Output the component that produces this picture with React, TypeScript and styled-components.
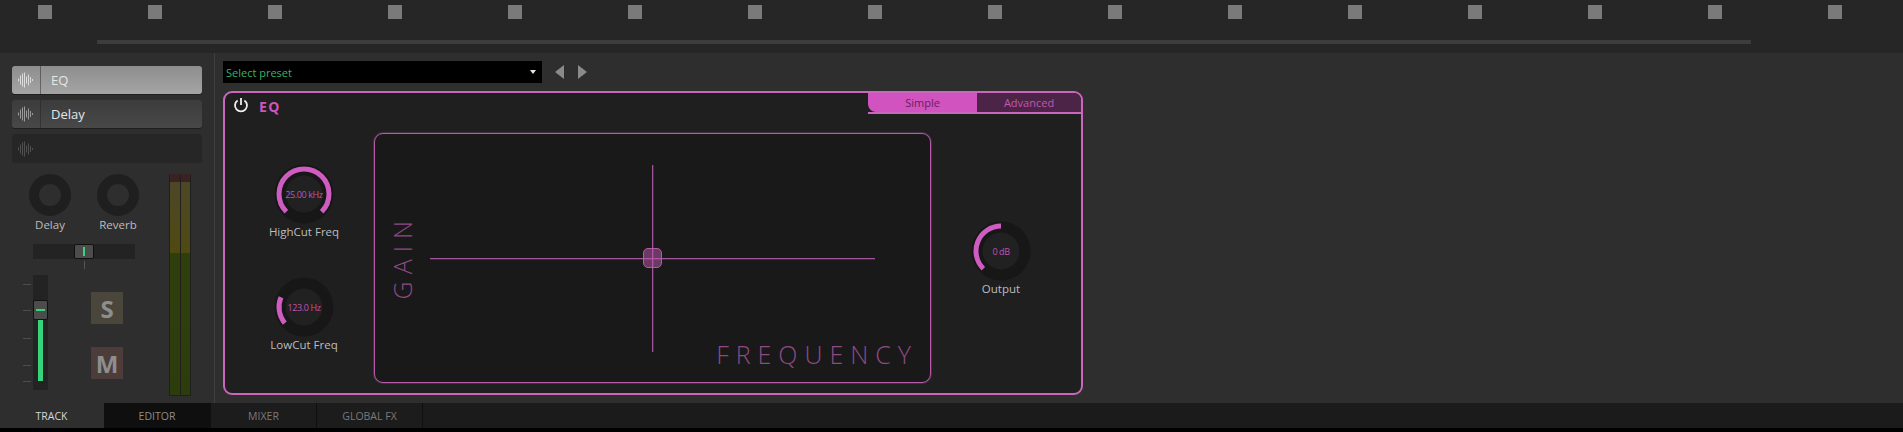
import { FC } from "react";
import styled, { createGlobalStyle } from "styled-components";

const GlobalStyle = createGlobalStyle`
  html, body {
    margin: 0;
    padding: 0;
    background: #000;
  }
  body {
    font-family: "Open Sans", "Noto Sans", sans-serif;
  }
`;

const Page = styled.div`
  width: 1903px;
  height: 432px;
  display: flex;
  flex-direction: column;
  overflow: hidden;
  background: #000;
`;

const Timeline = styled.div`
  height: 53px;
  flex: none;
  background: #262626;
  padding: 5px 0 0 38px;
  box-sizing: border-box;
`;

const MarkerRow = styled.div`
  display: flex;
  height: 35px;
`;

const MarkerCell = styled.div<{ $first?: boolean }>`
  width: ${(p) => (p.$first ? 110 : 120)}px;
  flex: none;
`;

const Marker = styled.div`
  width: 14px;
  height: 14px;
  background: #7a7a7a;
`;

const TimelineTrack = styled.div`
  margin-left: 59px;
  width: 1654px;
  height: 4px;
  background: #3d3d3d;
`;

const Main = styled.div`
  flex: 1;
  display: flex;
  min-height: 0;
  background: #2e2e2e;
`;

const Sidebar = styled.div`
  width: 215px;
  flex: none;
  box-sizing: border-box;
  padding: 13px 0 0 12px;
  border-right: 1px solid #3f3f3f;
`;

const SlotList = styled.div`
  display: flex;
  flex-direction: column;
  gap: 6px;
  width: 190px;
`;

const Slot = styled.div<{ $variant: "active" | "normal" | "empty" }>`
  height: ${(p) => (p.$variant === "empty" ? 29 : 28)}px;
  display: flex;
  align-items: center;
  border-radius: 3px;
  color: #e6e6e6;
  font-size: 13px;
  box-shadow: ${(p) => (p.$variant === "empty" ? "none" : "0 1px 0 #1f1f1f")};
  background: ${(p) =>
    p.$variant === "active"
      ? "linear-gradient(#8e8e8e, #a4a4a4)"
      : p.$variant === "normal"
        ? "linear-gradient(#3c3c3c, #484848)"
        : "#262626"};
`;

const SlotIcon = styled.div<{ $divided: boolean; $color: string }>`
  width: 29px;
  box-sizing: border-box;
  height: 100%;
  flex: none;
  display: flex;
  align-items: center;
  justify-content: center;
  color: ${(p) => p.$color};
  border-right: 1px solid ${(p) => (p.$divided ? "rgba(30, 30, 30, 0.45)" : "transparent")};
`;

const SlotName = styled.span`
  padding-left: 10px;
`;

const SendBlock = styled.div`
  display: flex;
  margin-top: 11px;
`;

const Strip = styled.div`
  width: 157px;
  flex: none;
`;

const KnobRow = styled.div`
  display: flex;
  gap: 8px;
  padding-left: 8px;
`;

const SendUnit = styled.div`
  width: 60px;
  display: flex;
  flex-direction: column;
  align-items: center;
`;

const SendKnob = styled.div`
  width: 42px;
  height: 42px;
  box-sizing: border-box;
  border-radius: 50%;
  border: 10px solid #1f1f1f;
  background: #2e2e2e;
`;

const SendLabel = styled.div`
  margin-top: 1px;
  font-size: 11.5px;
  line-height: 16px;
  color: #bdbdbd;
`;

const PanTrack = styled.div`
  margin: 11px 0 0 21px;
  width: 102px;
  height: 15px;
  background: #232323;
  display: flex;
  justify-content: center;
  position: relative;
`;

const PanHandle = styled.div`
  width: 20px;
  height: 15px;
  box-sizing: border-box;
  border: 1px solid #111;
  border-radius: 2px;
  background: #4c4c4c;
  display: flex;
  align-items: center;
  justify-content: center;
`;

const PanMark = styled.div`
  width: 2px;
  height: 9px;
  background: #37d57b;
`;

const PanTick = styled.div`
  position: absolute;
  left: 51px;
  top: 17px;
  width: 1px;
  height: 8px;
  background: #555;
`;

const MixRow = styled.div`
  display: flex;
  margin-top: 16px;
`;

const Fader = styled.div`
  margin-left: 21px;
  width: 15px;
  height: 115px;
  flex: none;
  position: relative;
  background: #232323;
`;

const FaderTick = styled.div<{ $top: number }>`
  position: absolute;
  left: -10px;
  top: ${(p) => p.$top}px;
  width: 8px;
  height: 1px;
  background: #4d4d4d;
`;

const FaderFill = styled.div`
  position: absolute;
  left: 5px;
  top: 45px;
  width: 5px;
  height: 61px;
  background: #37d57b;
`;

const FaderHandle = styled.div`
  position: absolute;
  left: 0;
  top: 25px;
  width: 15px;
  height: 20px;
  box-sizing: border-box;
  border: 1px solid #111;
  border-radius: 2px;
  background: #4c4c4c;
  display: flex;
  align-items: center;
  justify-content: center;
`;

const FaderMark = styled.div`
  width: 9px;
  height: 2px;
  background: #37d57b;
`;

const ToggleColumn = styled.div`
  margin: 17px 0 0 43px;
  display: flex;
  flex-direction: column;
  gap: 23px;
`;

const Toggle = styled.div<{ $tone: string }>`
  width: 32px;
  height: 32px;
  display: flex;
  align-items: center;
  justify-content: center;
  font-size: 24px;
  font-weight: 700;
  color: #8e8e8e;
  background: ${(p) => p.$tone};
`;

const Meter = styled.div`
  width: 22px;
  height: 222px;
  box-sizing: border-box;
  padding: 0 1px 1px 1px;
  display: flex;
  gap: 1px;
  background: #1f1f1f;
`;

const MeterBar = styled.div`
  flex: 1;
  background: linear-gradient(
    #3a2222 0,
    #3a2222 8px,
    #4d4728 8px,
    #4f4a10 79px,
    #2f3f0c 79px,
    #2c3c0b 100%
  );
`;

const Content = styled.div`
  flex: 1;
  box-sizing: border-box;
  padding: 8px 0 0 8px;
`;

const PresetRow = styled.div`
  display: flex;
  align-items: center;
  height: 22px;
`;

const PresetSelect = styled.div`
  width: 319px;
  height: 22px;
  box-sizing: border-box;
  padding: 0 6px 0 3px;
  background: #000;
  color: #38b368;
  font-size: 11px;
  display: flex;
  align-items: center;
  justify-content: space-between;
`;

const Caret = styled.div`
  width: 0;
  height: 0;
  border-left: 3px solid transparent;
  border-right: 3px solid transparent;
  border-top: 4px solid #e6e6e6;
`;

const ArrowButton = styled.div<{ $dir: "left" | "right" }>`
  width: 0;
  height: 0;
  margin-left: ${(p) => (p.$dir === "left" ? 13 : 14)}px;
  border-top: 7px solid transparent;
  border-bottom: 7px solid transparent;
  ${(p) => (p.$dir === "left" ? "border-right" : "border-left")}: 9px solid #8a8a8a;
`;

const EqPanel = styled.div`
  margin-top: 8px;
  width: 860px;
  height: 304px;
  box-sizing: border-box;
  border: 2px solid #cb66bd;
  border-radius: 9px;
  background: #1f1f1f;
  overflow: hidden;
`;

const EqHeader = styled.div`
  display: flex;
  height: 19px;
  align-items: flex-start;
`;

const PowerIcon = styled.svg`
  margin: 4px 0 0 8px;
  width: 16px;
  height: 16px;
  flex: none;
`;

const EqTitle = styled.div`
  margin: 6px 0 0 10px;
  font-size: 14px;
  line-height: 16px;
  font-weight: 700;
  letter-spacing: 1.5px;
  color: #cf55bd;
`;

const ModeTabs = styled.div`
  margin-left: auto;
  display: flex;
  height: 19px;
  border-bottom: 2px solid #cb66bd;
  box-sizing: content-box;
`;

const ModeTab = styled.div<{ $active?: boolean }>`
  width: ${(p) => (p.$active ? 109 : 104)}px;
  display: flex;
  align-items: center;
  justify-content: center;
  font-size: 11px;
  color: ${(p) => (p.$active ? "#64215f" : "#c058b0")};
  background: ${(p) => (p.$active ? "#d153c0" : "#4b2447")};
  border-bottom-left-radius: ${(p) => (p.$active ? 8 : 0)}px;
`;

const EqBody = styled.div`
  display: flex;
  margin-top: 21px;
`;

const KnobColumn = styled.div`
  width: 149px;
  flex: none;
  box-sizing: border-box;
  display: flex;
  flex-direction: column;
  align-items: center;
`;

const LeftKnobs = styled(KnobColumn)`
  padding: 31px 0 0 9px;
  gap: 37px;
`;

const RightKnobs = styled(KnobColumn)`
  padding: 88px 9px 0 0;
`;

const KnobUnit = styled.div`
  display: flex;
  flex-direction: column;
  align-items: center;
`;

const KnobDial = styled.div`
  position: relative;
  width: 60px;
  height: 60px;
`;

const KnobValue = styled.div`
  position: absolute;
  inset: 0;
  display: flex;
  align-items: center;
  justify-content: center;
  font-size: 9px;
  letter-spacing: -0.4px;
  color: #c052b2;
`;

const KnobLabel = styled.div`
  font-size: 11.5px;
  line-height: 16px;
  color: #bdbdbd;
`;

const XyPad = styled.div`
  position: relative;
  width: 557px;
  height: 250px;
  flex: none;
  box-sizing: border-box;
  border: 1px solid #b65aa9;
  border-radius: 9px;
  background: #191919;
  box-shadow: 0 0 0 1px rgba(164, 79, 152, 0.3);
`;

const AxisH = styled.div`
  position: absolute;
  left: 55px;
  top: 124px;
  width: 445px;
  height: 1px;
  background: #a0559a;
  box-shadow: 0 1px 0 rgba(160, 85, 154, 0.3);
`;

const AxisV = styled.div`
  position: absolute;
  left: 277px;
  top: 31px;
  width: 1px;
  height: 187px;
  background: #a0559a;
  box-shadow: 1px 0 0 rgba(160, 85, 154, 0.3);
`;

const PadHandle = styled.div`
  position: absolute;
  left: 268px;
  top: 114px;
  width: 19px;
  height: 20px;
  box-sizing: border-box;
  border: 1px solid #b65aa8;
  border-radius: 5px;
  background: rgba(190, 90, 175, 0.5);
`;

const AxisLabel = styled.div<{ $vertical?: boolean }>`
  position: absolute;
  font-size: 25px;
  line-height: 30px;
  font-weight: 300;
  color: #8f4a84;
  white-space: nowrap;
  letter-spacing: 7px;
  ${(p) =>
    p.$vertical
      ? `left: 12px; top: 80px; writing-mode: vertical-rl; transform: rotate(180deg);`
      : `right: 12px; top: 205px;`}
`;

const TabBar = styled.div`
  height: 25px;
  flex: none;
  display: flex;
  background: #1b1b1b;
  border-bottom: 4px solid #000;
  box-sizing: content-box;
`;

const BottomTab = styled.div<{ $state: "active" | "dark" | "normal"; $width: number }>`
  width: ${(p) => p.$width}px;
  box-sizing: border-box;
  display: flex;
  align-items: center;
  justify-content: center;
  font-size: 10.5px;
  color: ${(p) => (p.$state === "active" ? "#d6d6d6" : p.$state === "dark" ? "#8c8c8c" : "#7a7a7a")};
  background: ${(p) => (p.$state === "active" ? "#2e2e2e" : p.$state === "dark" ? "#0f0f0f" : "#1c1c1c")};
  border-right: 1px solid ${(p) => (p.$state === "normal" ? "#0f0f0f" : "transparent")};
`;

const polar = (r: number, deg: number) => {
  const a = (deg * Math.PI) / 180;
  return [30 + r * Math.sin(a), 30 - r * Math.cos(a)];
};

const arcPath = (r: number, from: number, to: number) => {
  const [x1, y1] = polar(r, from);
  const [x2, y2] = polar(r, to);
  return `M${x1} ${y1}A${r} ${r} 0 ${to - from > 180 ? 1 : 0} 1 ${x2} ${y2}`;
};

type KnobProps = { value: string; label: string; from: number; to: number };

const Knob: FC<KnobProps> = ({ value, label, from, to }) => (
  <KnobUnit>
    <KnobDial>
      <svg width="60" height="60" viewBox="0 0 60 60">
        <circle cx="30" cy="30" r="29.5" fill="#171717" />
        <circle cx="30" cy="30" r="18.5" fill="#212121" />
        <path d={arcPath(25, from, to)} fill="none" stroke="#cf5cc0" strokeWidth="5" />
      </svg>
      <KnobValue>{value}</KnobValue>
    </KnobDial>
    <KnobLabel>{label}</KnobLabel>
  </KnobUnit>
);

const WAVE_BARS = [3, 9, 13, 15, 7, 11, 6, 2];

const WaveIcon: FC = () => (
  <svg width="16" height="16" viewBox="0 0 16 16" fill="currentColor">
    {WAVE_BARS.map((h, i) => (
      <rect key={i} x={i * 2} y={8 - h / 2} width="1" height={h} />
    ))}
  </svg>
);

const FADER_TICKS = [9, 35, 63, 90, 106];
const MARKER_COUNT = 16;

const App: FC = () => {
  return (
    <Page>
      <GlobalStyle />
      <Timeline>
        <MarkerRow>
          {Array.from({ length: MARKER_COUNT }, (_, i) => (
            <MarkerCell key={i} $first={i === 0}>
              <Marker />
            </MarkerCell>
          ))}
        </MarkerRow>
        <TimelineTrack />
      </Timeline>
      <Main>
        <Sidebar>
          <SlotList>
            <Slot $variant="active">
              <SlotIcon $divided $color="#dcdcdc">
                <WaveIcon />
              </SlotIcon>
              <SlotName>EQ</SlotName>
            </Slot>
            <Slot $variant="normal">
              <SlotIcon $divided $color="#9a9a9a">
                <WaveIcon />
              </SlotIcon>
              <SlotName>Delay</SlotName>
            </Slot>
            <Slot $variant="empty">
              <SlotIcon $divided={false} $color="#4f4f4f">
                <WaveIcon />
              </SlotIcon>
            </Slot>
          </SlotList>
          <SendBlock>
            <Strip>
              <KnobRow>
                <SendUnit>
                  <SendKnob />
                  <SendLabel>Delay</SendLabel>
                </SendUnit>
                <SendUnit>
                  <SendKnob />
                  <SendLabel>Reverb</SendLabel>
                </SendUnit>
              </KnobRow>
              <PanTrack>
                <PanHandle>
                  <PanMark />
                </PanHandle>
                <PanTick />
              </PanTrack>
              <MixRow>
                <Fader>
                  {FADER_TICKS.map((top) => (
                    <FaderTick key={top} $top={top} />
                  ))}
                  <FaderFill />
                  <FaderHandle>
                    <FaderMark />
                  </FaderHandle>
                </Fader>
                <ToggleColumn>
                  <Toggle $tone="#4a463c">S</Toggle>
                  <Toggle $tone="#4c3d3a">M</Toggle>
                </ToggleColumn>
              </MixRow>
            </Strip>
            <Meter>
              <MeterBar />
              <MeterBar />
            </Meter>
          </SendBlock>
        </Sidebar>
        <Content>
          <PresetRow>
            <PresetSelect>
              <span>Select preset</span>
              <Caret />
            </PresetSelect>
            <ArrowButton $dir="left" />
            <ArrowButton $dir="right" />
          </PresetRow>
          <EqPanel>
            <EqHeader>
              <PowerIcon viewBox="0 0 16 16" fill="none" stroke="#eeeeee" strokeWidth="1.8">
                <path d="M4.6 3.4a6 6 0 1 0 6.8 0" />
                <path d="M8 1v7" />
              </PowerIcon>
              <EqTitle>EQ</EqTitle>
              <ModeTabs>
                <ModeTab $active>Simple</ModeTab>
                <ModeTab>Advanced</ModeTab>
              </ModeTabs>
            </EqHeader>
            <EqBody>
              <LeftKnobs>
                <Knob value="25.00 kHz" label="HighCut Freq" from={-135} to={135} />
                <Knob value="123.0 Hz" label="LowCut Freq" from={-130} to={-67} />
              </LeftKnobs>
              <XyPad>
                <AxisH />
                <AxisV />
                <PadHandle />
                <AxisLabel $vertical>GAIN</AxisLabel>
                <AxisLabel>FREQUENCY</AxisLabel>
              </XyPad>
              <RightKnobs>
                <Knob value="0 dB" label="Output" from={-135} to={0} />
              </RightKnobs>
            </EqBody>
          </EqPanel>
        </Content>
      </Main>
      <TabBar>
        <BottomTab $state="active" $width={104}>TRACK</BottomTab>
        <BottomTab $state="dark" $width={107}>EDITOR</BottomTab>
        <BottomTab $state="normal" $width={106}>MIXER</BottomTab>
        <BottomTab $state="normal" $width={106}>GLOBAL FX</BottomTab>
      </TabBar>
    </Page>
  );
};

export default App;
